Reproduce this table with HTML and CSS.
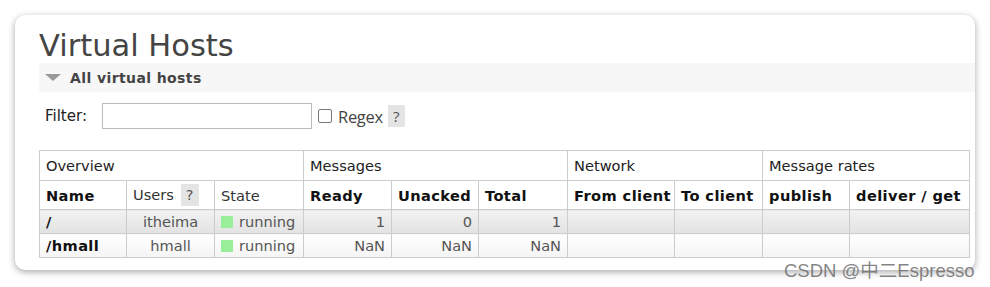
FILE: index.html
```html
<!DOCTYPE html>
<html>
<head>
<meta charset="utf-8">
<link rel="stylesheet" href="styles.css">
</head>
<body>
<div class="card">
  <h1 class="title">Virtual Hosts</h1>
  <div class="section-head"><span class="tri"></span><span class="section-title">All virtual hosts</span></div>
  <div class="filter">
    <label class="filter-label">Filter:</label>
    <input class="filter-input" type="text">
    <span class="cb"></span>
    <span class="regex">Regex</span>
    <span class="help">?</span>
  </div>
  <table class="list">
    <colgroup>
      <col style="width:87px"><col style="width:88px"><col style="width:89px"><col style="width:88px"><col style="width:87px"><col style="width:89px"><col style="width:107px"><col style="width:88px"><col style="width:87px"><col style="width:120px">
    </colgroup>
    <tr class="group">
      <th colspan="3">Overview</th>
      <th colspan="3">Messages</th>
      <th colspan="2">Network</th>
      <th colspan="2">Message rates</th>
    </tr>
    <tr class="head">
      <th>Name</th>
      <th class="normal">Users <span class="help small">?</span></th>
      <th class="normal">State</th>
      <th>Ready</th>
      <th>Unacked</th>
      <th>Total</th>
      <th>From client</th>
      <th>To client</th>
      <th>publish</th>
      <th>deliver / get</th>
    </tr>
    <tr class="row alt">
      <td class="name">/</td>
      <td class="c">itheima</td>
      <td><span class="dot"></span>running</td>
      <td class="r">1</td>
      <td class="r">0</td>
      <td class="r">1</td>
      <td></td><td></td><td></td><td></td>
    </tr>
    <tr class="row">
      <td class="name">/hmall</td>
      <td class="c">hmall</td>
      <td><span class="dot"></span>running</td>
      <td class="r">NaN</td>
      <td class="r">NaN</td>
      <td class="r">NaN</td>
      <td></td><td></td><td></td><td></td>
    </tr>
  </table>
</div>
<div class="wm">CSDN @中二Espresso</div>
</body>
</html>
```
FILE: styles.css
```css
html, body { margin: 0; padding: 0; background: #fff; }
body { font-family: "DejaVu Sans", Verdana, sans-serif; color: #484848; width: 990px; height: 287px; overflow: hidden; position: relative; }
.card {
  margin: 15px 0 0 15px;
  width: 960px;
  height: 255px;
  box-sizing: border-box;
  background: #fff;
  border-radius: 10px;
  box-shadow: 0 2px 7px rgba(0,0,0,0.35);
  padding: 13px 0 0 24px;
}
.title {
  margin: 0;
  font-size: 30.5px;
  font-weight: normal;
  color: #444;
  line-height: 35px;
}
.section-head {
  height: 29px;
  background: #f7f7f7;
  display: flex;
  align-items: center;
  padding-left: 6px;
}
.tri {
  width: 0; height: 0;
  border-left: 8px solid transparent;
  border-right: 8px solid transparent;
  border-top: 7px solid #999;
  margin-right: 9px;
}
.section-title { font-weight: bold; font-size: 14px; letter-spacing: 0.4px; color: #444; }
.filter {
  display: flex;
  align-items: center;
  margin-top: 11px;
  padding-left: 6px;
  height: 26px;
}
.filter-label { font-size: 15px; color: #222; width: 57px; }
.filter-input {
  width: 210px; height: 26px; box-sizing: border-box;
  border: 1px solid #bbb; margin: 0; padding: 0;
}
.cb {
  width: 12px; height: 12px; border: 1px solid #777; border-radius: 2px;
  margin-left: 6px; margin-right: 6px; background: #fff;
}
.regex { font-family: "Open Sans", "Liberation Sans", sans-serif; font-size: 16.5px; color: #444; letter-spacing: -0.3px; }
.help {
  display: inline-block; background: #e4e4e4; color: #555;
  font-family: "Open Sans", "Liberation Sans", sans-serif;
  width: 17px; height: 22px; line-height: 22px; text-align: center;
  font-size: 15px; margin-left: 5px;
}
.help.small { font-family: "DejaVu Sans", sans-serif; width: 18px; height: 22px; margin-left: 2px; font-size: 14.5px; }
.list {
  border-collapse: collapse;
  margin-top: 21px;
  table-layout: fixed;
  width: 930px;
  font-size: 14.6px;
}
.list th, .list td { border: 1px solid #ccc; padding: 0 6px; white-space: nowrap; overflow: hidden; }
.group th { height: 29px; font-weight: normal; text-align: left; color: #222; }
.head th { height: 28px; font-weight: bold; text-align: left; color: #111; letter-spacing: 0.4px; }
.head th.normal { font-weight: normal; color: #333; letter-spacing: 0; }
.row td { height: 23px; color: #555; }
.row.alt td { background: linear-gradient(#f2f2f2, #e2e2e2); }
.row:not(.alt) td { background: linear-gradient(#fff, #f4f4f4); }
.row td.name { font-weight: bold; color: #111; letter-spacing: 0.4px; }
.c { text-align: center; }
.r { text-align: right; }
.dot { display: inline-block; width: 12px; height: 12px; background: #99ee99; margin-right: 6px; vertical-align: -1px; }
.wm {
  position: absolute; left: 784px; top: 256px;
  font-family: "Liberation Sans", "Noto Sans CJK SC", sans-serif;
  font-size: 18.5px; color: rgba(110,110,110,0.85); white-space: nowrap;
}
```
